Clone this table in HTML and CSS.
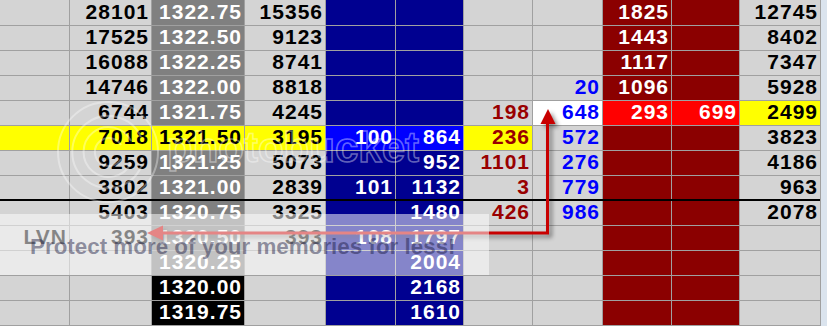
FILE: index.html
```html
<!DOCTYPE html>
<html lang="en">
<head>
<meta charset="utf-8">
<title>DOM ladder</title>
<link rel="stylesheet" href="styles.css">
</head>
<body>
<div class="page">
  <div class="ladder">
    <div class="row first">
      <div class="c"></div><div class="c">28101</div><div class="c p">1322.75</div><div class="c">15356</div><div class="c b"></div><div class="c b"></div><div class="c"></div><div class="c"></div><div class="c dr">1825</div><div class="c dr"></div><div class="c">12745</div>
    </div>
    <div class="row">
      <div class="c"></div><div class="c">17525</div><div class="c p">1322.50</div><div class="c">9123</div><div class="c b"></div><div class="c b"></div><div class="c"></div><div class="c"></div><div class="c dr">1443</div><div class="c dr"></div><div class="c">8402</div>
    </div>
    <div class="row">
      <div class="c"></div><div class="c">16088</div><div class="c p">1322.25</div><div class="c">8741</div><div class="c b"></div><div class="c b"></div><div class="c"></div><div class="c"></div><div class="c dr">1117</div><div class="c dr"></div><div class="c">7347</div>
    </div>
    <div class="row">
      <div class="c"></div><div class="c">14746</div><div class="c p">1322.00</div><div class="c">8818</div><div class="c b"></div><div class="c b"></div><div class="c"></div><div class="c tb">20</div><div class="c dr">1096</div><div class="c dr"></div><div class="c">5928</div>
    </div>
    <div class="row">
      <div class="c"></div><div class="c">6744</div><div class="c p">1321.75</div><div class="c">4245</div><div class="c b"></div><div class="c b"></div><div class="c tr">198</div><div class="c w tb">648</div><div class="c r">293</div><div class="c r">699</div><div class="c y">2499</div>
    </div>
    <div class="row">
      <div class="c y"></div><div class="c y">7018</div><div class="c y">1321.50</div><div class="c y">3195</div><div class="c bb">100</div><div class="c bb">864</div><div class="c y tr">236</div><div class="c tb">572</div><div class="c dr"></div><div class="c dr"></div><div class="c">3823</div>
    </div>
    <div class="row">
      <div class="c"></div><div class="c">9259</div><div class="c p">1321.25</div><div class="c">5073</div><div class="c b"></div><div class="c b">952</div><div class="c tr">1101</div><div class="c tb">276</div><div class="c dr"></div><div class="c dr"></div><div class="c">4186</div>
    </div>
    <div class="row">
      <div class="c"></div><div class="c">3802</div><div class="c p">1321.00</div><div class="c">2839</div><div class="c b">101</div><div class="c b">1132</div><div class="c tr">3</div><div class="c tb">779</div><div class="c dr"></div><div class="c dr"></div><div class="c">963</div>
    </div>
    <div class="row sep">
      <div class="c"></div><div class="c">5403</div><div class="c p">1320.75</div><div class="c">3325</div><div class="c b"></div><div class="c b">1480</div><div class="c tr">426</div><div class="c tb">986</div><div class="c dr"></div><div class="c dr"></div><div class="c">2078</div>
    </div>
    <div class="row">
      <div class="c">LVN</div><div class="c">393</div><div class="c p">1320.50</div><div class="c">393</div><div class="c b">108</div><div class="c b">1797</div><div class="c"></div><div class="c"></div><div class="c dr"></div><div class="c dr"></div><div class="c"></div>
    </div>
    <div class="row">
      <div class="c"></div><div class="c"></div><div class="c p">1320.25</div><div class="c"></div><div class="c b"></div><div class="c b">2004</div><div class="c"></div><div class="c"></div><div class="c dr"></div><div class="c dr"></div><div class="c"></div>
    </div>
    <div class="row">
      <div class="c"></div><div class="c"></div><div class="c k">1320.00</div><div class="c"></div><div class="c b"></div><div class="c b">2168</div><div class="c"></div><div class="c"></div><div class="c dr"></div><div class="c dr"></div><div class="c"></div>
    </div>
    <div class="row">
      <div class="c"></div><div class="c"></div><div class="c k">1319.75</div><div class="c"></div><div class="c b"></div><div class="c b">1610</div><div class="c"></div><div class="c"></div><div class="c dr"></div><div class="c dr"></div><div class="c"></div>
    </div>
  </div>

  <svg class="arrow" width="827" height="326" viewBox="0 0 827 326" aria-hidden="true">
    <g class="arrow-g">
      <polyline points="547.5,122 547.5,233 160,233" fill="none" stroke="#c80000" stroke-width="3"/>
      <polygon points="548,109 540.5,124 555.5,124" fill="#c80000"/>
      <polygon points="147,233 163,225.5 163,240.5" fill="#c80000"/>
    </g>
  </svg>

  <div class="band"><span class="band-text">Protect more of your memories for less!</span></div>

  <div class="wm">
    <svg class="wm-logo" width="110" height="110" viewBox="0 0 110 110" aria-hidden="true">
      <circle cx="55" cy="55" r="50" fill="none" stroke="#fff" stroke-width="2"/>
      <path d="M88 40 A36 36 0 1 0 88 70" fill="none" stroke="#fff" stroke-width="2"/>
      <path d="M78 44 A25 25 0 1 0 78 66" fill="none" stroke="#fff" stroke-width="2"/>
      <path d="M68 48 A14 14 0 1 0 68 62" fill="none" stroke="#fff" stroke-width="2"/>
    </svg>
    <span class="wm-text">photobucket</span>
  </div>
</div>
</body>
</html>
```
FILE: styles.css
```css
body {
  margin: 0;
  background: #dbe4ee;
  font-family: "Liberation Sans", Arial, sans-serif;
}

.page {
  position: relative;
  width: 827px;
  height: 326px;
  overflow: hidden;
}

.ladder {
  display: flex;
  flex-direction: column;
  gap: 1px;
  width: 820px;
  padding: 0 1px 1px 0;
  background: #a0a0a0;
}

.row {
  display: grid;
  grid-template-columns: 69px 81px 92px 80px 69px 67px 68px 69px 68px 67px 80px;
  gap: 1px;
  height: 24px;
}

.row.first {
  height: 25px;
}

.row.sep {
  box-shadow: 0 -2px 0 #000;
}

.c {
  background: #d4d4d4;
  color: #000;
  font-weight: bold;
  font-size: 21px;
  letter-spacing: 1px;
  line-height: 22px;
  text-align: right;
  padding-right: 2px;
  white-space: nowrap;
  overflow: hidden;
}

.first .c {
  padding-top: 1px;
}

.p { background: #808080; color: #fff; }
.k { background: #000; color: #fff; }
.b { background: #000090; color: #fff; }
.bb { background: #0000ff; color: #fff; }
.dr { background: #8b0000; color: #fff; }
.r { background: #ff0000; color: #fff; }
.y { background: #ffff00; color: #000; }
.w { background: #fff; }
.tb { color: #0000ff; }
.tr { color: #990000; }

.arrow {
  position: absolute;
  left: 0;
  top: 0;
  pointer-events: none;
}

.arrow-g {
  filter: drop-shadow(3px 3px 2px rgba(0, 0, 0, 0.45));
}

.band {
  position: absolute;
  left: 0;
  top: 214px;
  width: 489px;
  height: 61px;
  background: rgba(255, 255, 255, 0.52);
}

.band-text {
  position: absolute;
  left: 30px;
  top: 21px;
  font-size: 22.4px;
  font-weight: bold;
  line-height: 24px;
  color: rgba(20, 20, 60, 0.45);
  white-space: nowrap;
}

.wm {
  position: absolute;
  left: 53px;
  top: 97px;
  pointer-events: none;
}

.wm-logo {
  position: absolute;
  left: 0;
  top: 0;
  opacity: 0.35;
}

.wm-text {
  position: absolute;
  left: 114px;
  top: 30px;
  font-size: 42px;
  font-weight: bold;
  line-height: 42px;
  color: transparent;
  -webkit-text-stroke: 1.5px rgba(255, 255, 255, 0.4);
  white-space: nowrap;
}
```
